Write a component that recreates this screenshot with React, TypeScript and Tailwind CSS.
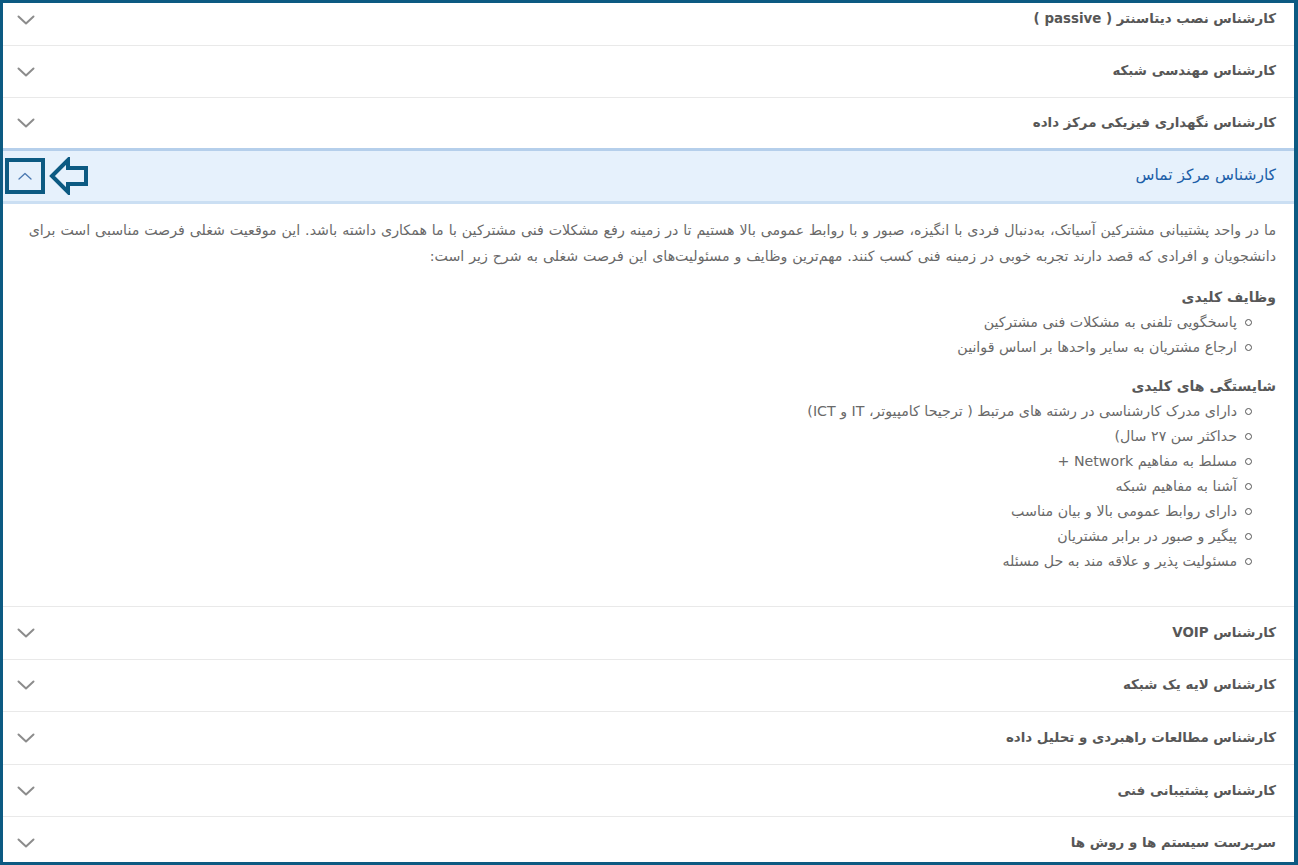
import React from "react";

const FONT = { fontFamily: '"DejaVu Sans", "Noto Sans", sans-serif' };

function ChevronDown() {
  return (
    <svg width="18" height="10" viewBox="0 0 18 10" fill="none">
      <path d="M1.5 1.5 L9 8.5 L16.5 1.5" stroke="#8c8c8c" strokeWidth="2" strokeLinecap="round" strokeLinejoin="round" />
    </svg>
  );
}

function Row({ title, first, tall }: { title: string; first?: boolean; tall?: boolean }) {
  return (
    <div
      className={`flex shrink-0 items-center justify-between border-b border-[#e9e9e9] pl-[14px] pr-[18px] ${tall ? "h-[52.6px]" : "h-[52px]"} ${first ? "-mt-[9px]" : ""}`}
    >
      <span className="text-[13.4px] font-bold text-[#575757]">{title}</span>
      <ChevronDown />
    </div>
  );
}

const duties = [
  "پاسخگویی تلفنی به مشکلات فنی مشترکین",
  "ارجاع مشتریان به سایر واحدها بر اساس قوانین",
];

const skills = [
  "دارای مدرک کارشناسی در رشته های مرتبط ( ترجیحا کامپیوتر، IT و ICT)",
  "حداکثر سن ۲۷ سال)",
  "مسلط به مفاهیم Network +",
  "آشنا به مفاهیم شبکه",
  "دارای روابط عمومی بالا و بیان مناسب",
  "پیگیر و صبور در برابر مشتریان",
  "مسئولیت پذیر و علاقه مند به حل مسئله",
];

function Item({ text }: { text: string }) {
  return (
    <li className="flex items-center gap-[8px]">
      <span className="h-[7px] w-[7px] shrink-0 rounded-full border-[1.5px] border-[#555]" />
      <span>{text}</span>
    </li>
  );
}

export default function App() {
  return (
    <div
      dir="rtl"
      style={FONT}
      className="box-border flex h-[865px] w-[1298px] flex-col overflow-hidden border-t-[3px] border-r-[4px] border-b-[3px] border-l-[3px] border-[#0c5a82] bg-white"
    >
      <Row first title="کارشناس نصب دیتاسنتر ( passive )" />
      <Row title="کارشناس مهندسی شبکه" />
      <div className="flex h-[50px] shrink-0 items-center justify-between pl-[14px] pr-[18px]">
        <span className="text-[13.4px] font-bold text-[#575757]">کارشناس نگهداری فیزیکی مرکز داده</span>
        <ChevronDown />
      </div>

      {/* active header */}
      <div className="flex h-[56px] shrink-0 items-center justify-between border-t-[3px] border-b-[3px] border-t-[#b5cfeb] border-b-[#cbdff3] bg-[#e6f1fc] pl-[2px] pr-[18px]">
        <span className="text-[15.5px] text-[#1d5fa8]">کارشناس مرکز تماس</span>
        <div className="flex flex-row-reverse items-center gap-[4px]">
          <div className="flex h-[36px] w-[40px] items-center justify-center border-[4px] border-[#0c5a82]">
            <svg width="14" height="8" viewBox="0 0 14 8" fill="none">
              <path d="M1 7 L7 1.5 L13 7" stroke="#4a78b0" strokeWidth="1.3" strokeLinecap="round" strokeLinejoin="round" />
            </svg>
          </div>
          <svg width="40" height="38" viewBox="0 0 40 38" fill="none">
            <path
              d="M3 19 L19 3 L19 11 L37 11 L37 27 L19 27 L19 35 Z"
              stroke="#0c5a82"
              strokeWidth="4"
              strokeLinejoin="miter"
            />
          </svg>
        </div>
      </div>

      {/* content */}
      <div className="shrink-0 border-b border-[#e9e9e9] pt-[13px] pr-[18px] pb-[32px] pl-[18px] text-[14.2px] leading-[26px] text-[#696969]">
        <p className="[word-spacing:0.4px]">
          ما در واحد پشتیبانی مشترکین آسیاتک، به‌دنبال فردی با انگیزه، صبور و با روابط عمومی بالا هستیم تا در زمینه رفع مشکلات فنی مشترکین با ما همکاری داشته باشد. این موقعیت شغلی فرصت مناسبی است برای دانشجویان و افرادی که قصد دارند تجربه خوبی در زمینه فنی کسب کنند. مهم‌ترین وظایف و مسئولیت‌های این فرصت شغلی به شرح زیر است:
        </p>
        <h4 className="mt-[15px] text-[14px] font-bold leading-[26px] text-[#585858]">وظایف کلیدی</h4>
        <ul className="pr-[24px] leading-[25px]">
          {duties.map((d) => (
            <Item key={d} text={d} />
          ))}
        </ul>
        <h4 className="mt-[13px] text-[14px] font-bold leading-[26px] text-[#585858]">شایستگی های کلیدی</h4>
        <ul className="pr-[24px] leading-[25px]">
          {skills.map((d) => (
            <Item key={d} text={d} />
          ))}
        </ul>
      </div>

      <Row tall title="کارشناس VOIP" />
      <Row tall title="کارشناس لایه یک شبکه" />
      <Row tall title="کارشناس مطالعات راهبردی و تحلیل داده" />
      <Row tall title="کارشناس پشتیبانی فنی" />
      <Row tall title="سرپرست سیستم ها و روش ها" />
    </div>
  );
}
